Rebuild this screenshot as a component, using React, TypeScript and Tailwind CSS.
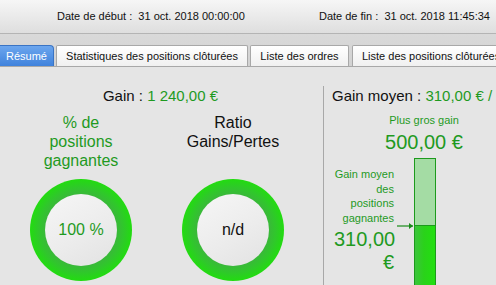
export default function App() {
  const green = "text-[#1f9a1f]";
  return (
    <div className="w-[496px] h-[285px] overflow-hidden bg-[#e5e5e5] [font-family:'Liberation_Sans',Arial,sans-serif] text-[#111]">
      {/* header */}
      <div className="h-[34px] border-b border-[#b4b4b4] bg-[linear-gradient(#f6f6f6,#dedede)] flex items-center text-[11px] whitespace-nowrap">
        <span className="ml-[57px]">Date de début :&nbsp; 31 oct. 2018 00:00:00</span>
        <span className="ml-auto mr-[6px]">Date de fin :&nbsp; 31 oct. 2018 11:45:34</span>
      </div>
      {/* tab strip */}
      <div className="h-[33px] bg-[linear-gradient(#d9d9d9,#d2d2d2)] border-b border-[#a8a8a8] flex items-end gap-[2px] text-[11px] whitespace-nowrap overflow-hidden">
        <div className="shrink-0 w-[54px] h-[21px] rounded-tr-[4px] bg-[linear-gradient(#6ca6ee,#3f82dc)] border border-[#3a74c4] border-l-0 border-b-0 text-white flex items-center justify-center">Résumé</div>
        <div className="shrink-0 w-[192px] h-[21px] rounded-t-[2px] bg-[linear-gradient(#ffffff,#f0f0f0)] border border-[#a8a8a8] border-b-0 flex items-center justify-center">Statistiques des positions clôturées</div>
        <div className="shrink-0 w-[99px] h-[21px] rounded-t-[2px] bg-[linear-gradient(#ffffff,#f0f0f0)] border border-[#a8a8a8] border-b-0 flex items-center justify-center">Liste des ordres</div>
        <div className="shrink-0 ml-[1px] w-[170px] h-[21px] rounded-t-[2px] bg-[linear-gradient(#ffffff,#f0f0f0)] border border-[#a8a8a8] border-b-0 flex items-center pl-[9px]">Liste des positions clôturées</div>
      </div>
      {/* content */}
      <div className="flex mt-[19px]">
        {/* left */}
        <div className="w-[324px] shrink-0 border-r border-[#a8a8a8] h-[200px]">
          <div className="h-[20px] flex items-center justify-center text-[15px] pr-[2px]">
            <span>Gain :&nbsp;</span>
            <span className={green}>1 240,00 €</span>
          </div>
          <div className="flex mt-[7px]">
            <div className="w-[162px] flex flex-col items-center">
              <div className={`w-[100px] h-[66px] text-center text-[16px] leading-[19px] ${green}`}>% de positions gagnantes</div>
              <Ring><span className={`text-[16px] ${green}`}>100 %</span></Ring>
            </div>
            <div className="w-[142px] flex flex-col items-center">
              <div className="w-[100px] h-[66px] text-center text-[16px] leading-[19px]">Ratio Gains/Pertes</div>
              <Ring><span className="text-[16px]">n/d</span></Ring>
            </div>
          </div>
        </div>
        {/* right */}
        <div className="w-[200px] shrink-0 overflow-hidden">
          <div className="h-[20px] flex items-center pl-[8px] text-[15px] whitespace-nowrap">
            <span>Gain moyen :&nbsp;</span>
            <span className={green}>310,00 € / </span>
          </div>
          <div className={`text-center text-[11px] mt-[7px] leading-[14px] ${green}`}>Plus gros gain</div>
          <div className={`text-center text-[20px] leading-[24px] mt-[3px] ${green}`}>500,00 €</div>
          <div className="flex mt-[4px]">
            <div className={`ml-[10px] w-[60px] text-right mt-[9px] ${green}`}>
              <div className="text-[11px] leading-[14.5px]">Gain moyen des positions gagnantes</div>
              <div className="text-[20px] leading-[23px] mt-[3px]">310,00 €</div>
            </div>
            <svg width="20" height="80" viewBox="0 0 20 80" className="shrink-0">
              <line x1="3" y1="68" x2="19" y2="68" stroke="#1a8a1a" strokeWidth="1.2" />
              <path d="M15 65 L19 68 L15 71 Z" fill="#1a8a1a" />
            </svg>
            <div className="w-[22px] h-[180px] border border-[#1c9a1c] flex flex-col shrink-0">
              <div className="h-[67px] bg-[#a4dca4] border-b border-[#1c9a1c]" />
              <div className="flex-1 bg-[linear-gradient(90deg,#3cc43c,#2ad21a_45%,#22e010)]" />
            </div>
          </div>
        </div>
      </div>
    </div>
  );
}

function Ring({ children }: { children: React.ReactNode }) {
  return (
    <div className="w-[102px] h-[102px] rounded-full bg-[radial-gradient(circle_closest-side,#3ab83a_70%,#2fc82a_84%,#22dc10_100%)] flex items-center justify-center shrink-0">
      <div className="w-[72px] h-[72px] rounded-full bg-[linear-gradient(150deg,#f6f6f6,#ececec_55%,#e2e2e2)] flex items-center justify-center">
        {children}
      </div>
    </div>
  );
}
